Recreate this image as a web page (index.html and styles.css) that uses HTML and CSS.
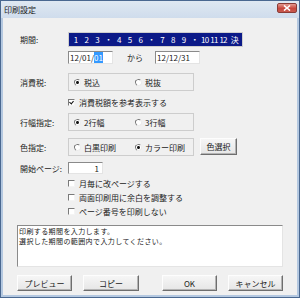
FILE: index.html
```html
<!DOCTYPE html>
<html lang="ja">
<head>
  <meta charset="UTF-8">
  <title>印刷設定</title>
  <link rel="stylesheet" href="styles.css">
</head>
<body>
  <div class="window">
    <div class="titlebar">
      <span class="title">印刷設定</span>
      <span class="close">
        <svg width="8" height="6" viewBox="0 0 8 6"><path d="M1 0.5 L7 5.5 M7 0.5 L1 5.5" stroke="#fff" stroke-width="1.6"/></svg>
      </span>
    </div>
    <div class="dialog">
      <div class="row period">
        <span class="label">期間:</span>
        <div class="months">
          <span>1</span><span>2</span><span>3</span><span>・</span>
          <span>4</span><span>5</span><span>6</span><span>・</span>
          <span>7</span><span>8</span><span>9</span><span>・</span>
          <span class="two">10</span><span class="two">11</span><span class="two">12</span><span class="kan">決</span>
        </div>
      </div>

      <div class="row dates indent">
        <div class="field date">12/01/<span class="sel">01</span></div>
        <span class="kara">から</span>
        <div class="field date">12/12/31</div>
      </div>

      <div class="row tax">
        <span class="label">消費税:</span>
        <div class="group">
          <span class="opt"><span class="radio on"></span>税込</span>
          <span class="opt"><span class="radio"></span>税抜</span>
        </div>
      </div>

      <div class="row check-row indent tax-ref"><span class="check on"></span>消費税額を参考表示する</div>

      <div class="row lines">
        <span class="label">行幅指定:</span>
        <div class="group">
          <span class="opt"><span class="radio on"></span>2行幅</span>
          <span class="opt"><span class="radio"></span>3行幅</span>
        </div>
      </div>

      <div class="row colors">
        <span class="label">色指定:</span>
        <div class="group">
          <span class="opt"><span class="radio"></span>白黒印刷</span>
          <span class="opt"><span class="radio on"></span>カラー印刷</span>
        </div>
        <span class="btn small">色選択</span>
      </div>

      <div class="row start">
        <span class="label">開始ページ:</span>
        <div class="field page">1</div>
      </div>

      <div class="row check-row indent first"><span class="check"></span>月毎に改ページする</div>
      <div class="row check-row indent"><span class="check"></span>両面印刷用に余白を調整する</div>
      <div class="row check-row indent"><span class="check"></span>ページ番号を印刷しない</div>

      <div class="memo">
        <div>印刷する期間を入力します。</div>
        <div>選択した期間の範囲内で入力してください。</div>
      </div>

      <div class="buttons">
        <span class="btn">プレビュー</span>
        <span class="btn copy">コピー</span>
        <span class="btn ok">OK</span>
        <span class="btn cancel">キャンセル</span>
      </div>
    </div>
  </div>
</body>
</html>
```

FILE: styles.css
```css
* { box-sizing: border-box; }
body { margin: 0; font-family: "Noto Sans CJK JP", sans-serif; font-size: 8px; color: #1a1a1a; background: #fff; }

.window { width: 300px; height: 298px; display: flex; flex-direction: column; background: #b4c8e0; border: 1px solid #4a6890; padding: 0 2px 2px; }
.titlebar { height: 17px; display: flex; align-items: center; justify-content: space-between; padding: 0 2px 0 3px; background: linear-gradient(#dfe8f2, #cfdcec); margin: 0 -2px; }
.title { color: #1a1a1a; }
.close { width: 20px; height: 10px; margin-top: -3px; display: flex; align-items: center; justify-content: center; border-radius: 2px; border: 1px solid #8a3b36; background: linear-gradient(#e49a90, #c8473d 55%, #c75a4f); }

.dialog { flex: 1; background: #f0f0f0; padding: 0 14px; display: flex; flex-direction: column; }

.row { display: flex; align-items: center; }
.label { width: 51px; padding-left: 3px; flex-shrink: 0; }
.indent { padding-left: 51px; }

.period { margin-top: 14px; height: 15px; }
.months { width: 175px; height: 15px; border: 1px solid #cfcfcf; background: #0c1a88; color: #fff; display: flex; align-items: center; padding-left: 1.6px; }
.months span { width: 10.8px; text-align: center; flex-shrink: 0; }
.months .two { width: 9.2px; letter-spacing: -0.7px; }
.months .kan { width: 12px; margin-left: 1px; }

.dates { margin-top: 4px; height: 13px; }
.field { background: #fff; border: 1px solid; border-color: #8a8a8a #e4e4e4 #e4e4e4 #8a8a8a; display: flex; align-items: center; }
.date { width: 45px; height: 13px; padding-left: 1px; }
.sel { background: #3399ff; color: #fff; }
.kara { margin: 0 12px 0 14px; }

.group { width: 126px; height: 18px; border: 1px solid #cdcdcd; display: flex; align-items: center; padding-left: 5px; }
.opt { display: flex; align-items: center; width: 61px; flex-shrink: 0; }
.radio { width: 7px; height: 7px; margin-right: 3px; border-radius: 50%; background: #fff; border: 1px solid; border-color: #7a7a7a #eaeaea #eaeaea #7a7a7a; transform: rotate(-10deg); display: flex; align-items: center; justify-content: center; }
.radio.on::after { content: ""; width: 3px; height: 3px; border-radius: 50%; background: #111; }

.check { width: 7px; height: 7px; margin-right: 4px; background: #fff; border: 1px solid; border-color: #7a7a7a #f4f4f4 #f4f4f4 #7a7a7a; position: relative; }
.check.on::after { content: ""; position: absolute; left: 1px; top: 0; width: 2px; height: 3px; border: solid #111; border-width: 0 1.2px 1.2px 0; transform: rotate(40deg); }

.tax { margin-top: 9px; height: 18px; }
.check-row { height: 14px; }
.tax-ref { margin-top: 4px; }
.lines { margin-top: 4px; height: 18px; }
.colors { margin-top: 7px; height: 18px; }
.start { margin-top: 6px; height: 12px; }
.page { width: 35px; height: 12px; justify-content: flex-end; padding-right: 3px; }
.first { margin-top: 2px; }

.btn { height: 16px; width: 55px; display: flex; align-items: center; justify-content: center; background: linear-gradient(#f6f6f6, #e6e6e6); border: 1px solid; border-color: #fdfdfd #6e6e6e #6e6e6e #fdfdfd; box-shadow: inset -1px -1px 0 #b4b4b4; }
.btn.small { width: 37px; height: 17px; margin-left: 6px; align-self: flex-start; }

.memo { margin-top: 7px; height: 42px; background: #fff; border: 1px solid; border-color: #8a8a8a #e4e4e4 #e4e4e4 #8a8a8a; font-size: 7px; letter-spacing: 0.4px; line-height: 10.2px; padding: 0 0 0 1px; }

.buttons { margin-top: 8px; display: flex; }
.copy { width: 56px; margin-left: 11px; }
.ok { margin-left: 23px; }
.cancel { margin-left: 11px; }
```
